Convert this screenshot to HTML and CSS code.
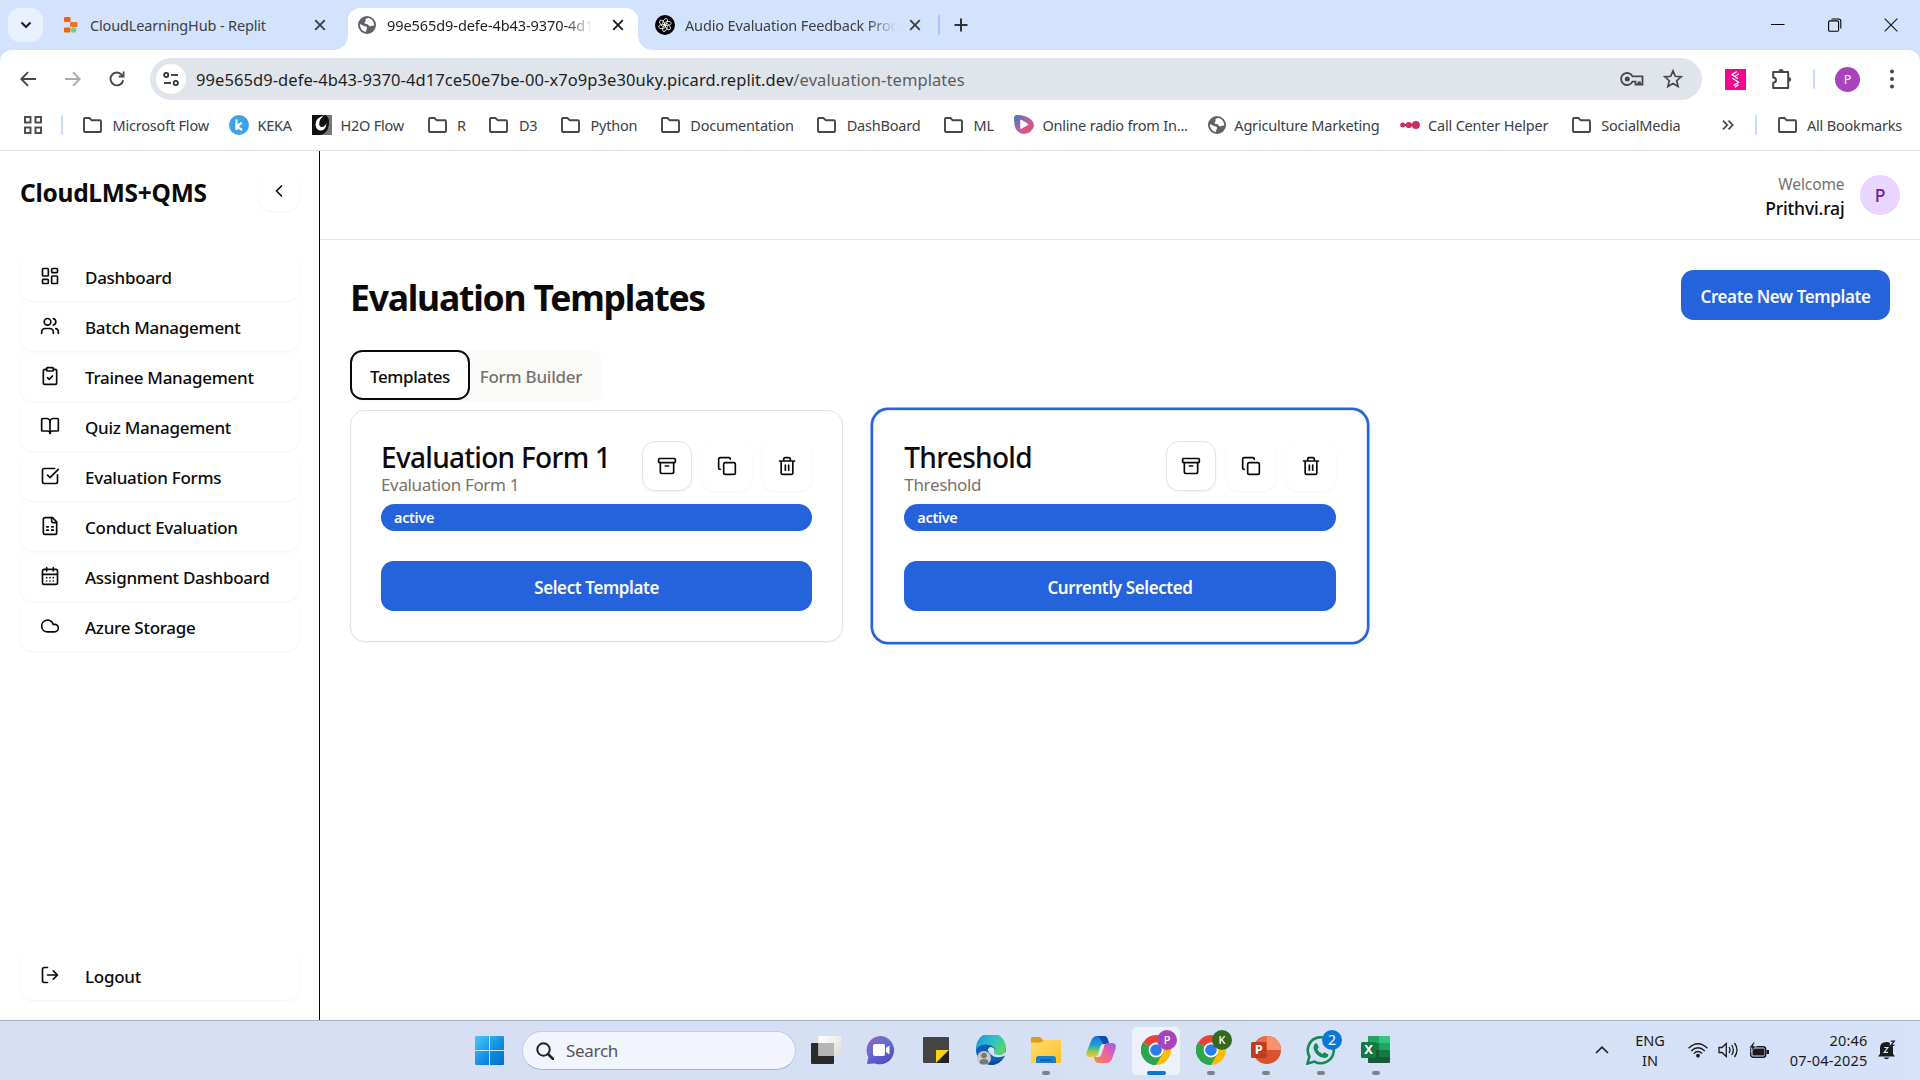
FILE: index.html
```html
<!DOCTYPE html>
<html lang="en">
<head>
<meta charset="utf-8">
<title>Evaluation Templates</title>
<link rel="stylesheet" href="styles.css">
</head>
<body>
<svg class="defs" width="0" height="0">
  <symbol id="folder" viewBox="0 0 21 18"><path d="M2 15V3Q2 2 3 2H7.5L9.7 4.3H18Q19 4.3 19 5.3V15Q19 16 18 16H3Q2 16 2 15Z" fill="none" stroke="#474747" stroke-width="1.9"/></symbol>
  <symbol id="globe" viewBox="0 0 18 18"><circle cx="9" cy="9" r="9" fill="#5f6368"/><path d="M10.500 2C8 2.200 6.800 3.500 7.500 4.600 8.200 5.600 6.300 6 6.600 7.200 7 8.300 9.600 7.600 10.200 8.800 10.700 10 12 10.800 13.200 10 14.300 9.400 15.500 9.800 16.200 9.200 16 5.500 13.800 2.700 10.500 2ZM1.900 8.300C1.700 12 4.500 15.300 7.600 15.900 8.600 15 7.800 14 8.700 13.200 9.700 12.200 8.800 10.300 7 10.300 5.200 10.300 4.300 8.500 1.900 8.300Z" fill="#fff"/></symbol>
  <symbol id="x" viewBox="0 0 12 12"><path d="M1.2 1.2 10.8 10.8M10.8 1.2 1.2 10.8" fill="none" stroke="currentColor" stroke-width="1.9"/></symbol>
  <symbol id="chrome" viewBox="0 0 30 30"><path d="M15 15 2.01 7.5A15 15 0 0 1 27.99 7.5Z" fill="#ea4335"/><path d="M15 15 27.99 7.5A15 15 0 0 1 15 30Z" fill="#fbbc04"/><path d="M15 15 15 30A15 15 0 0 1 2.01 7.5Z" fill="#2da44e"/><path d="M15 7.5H28L21.5 18.7 15 30 17 20Z" fill="#fbbc04"/><path d="M2 7.5 8.6 18.8 15 22.5 21.4 18.8 15 30A15 15 0 0 1 2 7.5Z" fill="#2da44e"/><circle cx="15" cy="15" r="7.4" fill="#fff"/><circle cx="15" cy="15" r="5.8" fill="#2b7de9"/></symbol>
  <symbol id="archive" viewBox="0 0 24 24"><rect x="2" y="3" width="20" height="5" rx="1"/><path d="M4 8v11a2 2 0 0 0 2 2h12a2 2 0 0 0 2-2V8M10 12h4"/></symbol>
  <symbol id="copy" viewBox="0 0 24 24"><rect x="8" y="8" width="14" height="14" rx="2"/><path d="M4 16c-1.1 0-2-.9-2-2V4c0-1.100.9-2 2-2h10c1.100 0 2 .9 2 2"/></symbol>
  <symbol id="trash" viewBox="0 0 24 24"><path d="M3 6h18M19 6v14c0 1-1 2-2 2H7c-1 0-2-1-2-2V6M8 6V4c0-1 1-2 2-2h4c1 0 2 1 2 2v2M10 11v6M14 11v6"/></symbol>
</svg>

<header class="browser">
  <div class="tabstrip">
    <button class="tab-search"><svg width="12" height="8" viewBox="0 0 12 8"><path d="M1.500 1.500 6 6 10.500 1.500" fill="none" stroke="#1f1f1f" stroke-width="2.200"/></svg></button>
    <div class="tab tab-replit">
      <svg width="14" height="16" viewBox="0 0 14 16"><rect width="6.500" height="5" rx="1" fill="#f26207"/><rect x="6" y="5" width="7.500" height="5" rx="1" fill="#f2702a"/><rect y="10.500" width="6.500" height="5" rx="1" fill="#f26207"/><circle cx="9.700" cy="13" r="2.700" fill="#5fd68b"/></svg>
      <span class="tab-title">CloudLearningHub - Replit</span>
      <svg class="close" width="12" height="12"><use href="#x"/></svg>
    </div>
    <div class="tab tab-active">
      <svg width="18" height="18"><use href="#globe"/></svg>
      <span class="tab-title faded">99e565d9-defe-4b43-9370-4d1</span>
      <svg class="close" width="12" height="12"><use href="#x"/></svg>
    </div>
    <div class="tab tab-audio">
      <svg width="20" height="20" viewBox="0 0 20 20"><circle cx="10" cy="10" r="10" fill="#000"/><g fill="none" stroke="#fff" stroke-width=".8"><ellipse cx="8.700" cy="7" rx="2" ry="3.500" transform="rotate(25 10 10)"/><ellipse cx="8.700" cy="7" rx="2" ry="3.500" transform="rotate(85 10 10)"/><ellipse cx="8.700" cy="7" rx="2" ry="3.500" transform="rotate(145 10 10)"/><ellipse cx="8.700" cy="7" rx="2" ry="3.500" transform="rotate(205 10 10)"/><ellipse cx="8.700" cy="7" rx="2" ry="3.500" transform="rotate(265 10 10)"/><ellipse cx="8.700" cy="7" rx="2" ry="3.500" transform="rotate(325 10 10)"/></g></svg>
      <span class="tab-title faded">Audio Evaluation Feedback Proc</span>
      <svg class="close" width="12" height="12"><use href="#x"/></svg>
    </div>
    <i class="tab-divider"></i>
    <svg class="new-tab" width="14" height="14" viewBox="0 0 14 14"><path d="M7 .5V13.500M.5 7H13.500" stroke="#333" stroke-width="2"/></svg>
    <div class="window-controls">
      <svg width="14" height="14" viewBox="0 0 14 14"><path d="M0 6.500H13.500" stroke="#000"/></svg>
      <svg width="14" height="14" viewBox="0 0 14 14"><path d="M3.500 1H10.500Q12.800 1 12.800 3.300V10.500" fill="none" stroke="#000" stroke-width="1.100"/><rect x=".6" y="2.900" width="10" height="10.300" rx="1.200" fill="none" stroke="#000" stroke-width="1.100"/></svg>
      <svg width="14" height="14" viewBox="0 0 14 14"><path d="M.7.7 13.300 13.300M13.300.7.7 13.300" stroke="#111" stroke-width="1.100"/></svg>
    </div>
  </div>

  <div class="toolbar">
    <svg width="16" height="16" viewBox="0 0 16 16"><path d="M16 8H1.700M8 1.200 1.300 8 8 14.800" fill="none" stroke="#474747" stroke-width="1.900"/></svg>
    <svg width="16" height="16" viewBox="0 0 16 16"><path d="M0 8H14.300M8 1.200 14.700 8 8 14.800" fill="none" stroke="#a8abad" stroke-width="1.900"/></svg>
    <svg width="16" height="16" viewBox="0 0 16 16"><path d="M14.200 9.200A6.400 6.400 0 1 1 12.800 3.800L14.500 5.600" fill="none" stroke="#474747" stroke-width="1.900"/><path d="M15.500.6V6.400H9.700V4.600H13.700V.6Z" fill="#474747"/></svg>
    <div class="omnibox">
      <span class="site-info"><svg width="16" height="14" viewBox="0 0 16 14"><g fill="none" stroke="#333" stroke-width="1.800"><circle cx="3.200" cy="3" r="2.100"/><path d="M8 3H15"/><circle cx="12.800" cy="11" r="2.100"/><path d="M1 11H8"/></g></svg></span>
      <span class="url">99e565d9-defe-4b43-9370-4d17ce50e7be-00-x7o9p3e30uky.picard.replit.dev<span class="path">/evaluation-templates</span></span>
      <svg class="key" width="24" height="16" viewBox="0 0 24 16"><g fill="none" stroke="#474747" stroke-width="1.800"><path d="M12.500 5.400A6 6 0 1 0 12.500 10.600H15.500V13.500H18.500V11.300H20V13.500H22.500V5.400Z"/></g><circle cx="7.300" cy="8" r="2.500" fill="#474747"/></svg>
      <svg width="20" height="20" viewBox="0 0 20 20"><path d="M10 1.800 12.300 7.300 18.200 7.800 13.700 11.700 15.100 17.500 10 14.400 4.900 17.500 6.300 11.700 1.800 7.800 7.700 7.300Z" fill="none" stroke="#474747" stroke-width="1.700"/></svg>
    </div>
    <svg class="ext-pink" width="21" height="21" viewBox="0 0 21 21"><rect width="21" height="21" fill="#f5058f"/><path d="M11.800 2.500 7 5.600 13 9.800M13.800 4.800 10.200 7.200M7.200 9 13.500 13.300 8.600 16.600M13.500 15.600 9.800 18.300" fill="none" stroke="#fff" stroke-width="1.300"/></svg>
    <svg class="ext-puzzle" width="22" height="22" viewBox="0 0 22 22"><path d="M2.200 4H17.200V20H2.200V14.800Q5 14.600 5 12.100T2.200 9.400Z" fill="none" stroke="#474747" stroke-width="2" stroke-linejoin="round"/><path d="M7.500 3.500A2.500 2.500 0 0 1 12.500 3.500ZM17.700 9A2.500 2.500 0 0 1 17.700 14Z" fill="#474747"/></svg>
    <i class="sep"></i>
    <span class="profile">P</span>
    <svg class="menu-dots" width="4" height="20" viewBox="0 0 4 20"><g fill="#474747"><circle cx="2" cy="2.500" r="2"/><circle cx="2" cy="10" r="2"/><circle cx="2" cy="17.500" r="2"/></g></svg>
  </div>

  <nav class="bookmarks">
    <svg class="apps" width="18" height="18" viewBox="0 0 18 18"><g fill="none" stroke="#474747" stroke-width="1.900"><rect x="1" y="1" width="5.500" height="5.500"/><rect x="11.500" y="1" width="5.500" height="5.500"/><rect x="1" y="11.500" width="5.500" height="5.500"/><rect x="11.500" y="11.500" width="5.500" height="5.500"/></g></svg>
    <i class="sep"></i>
    <a class="first"><svg width="21" height="18"><use href="#folder"/></svg>Microsoft Flow</a>
    <a class="near"><svg width="20" height="20" viewBox="0 0 20 20"><circle cx="10" cy="10" r="10" fill="#3ba1ea"/><path d="M7.500 4.500V15M12.800 7.700 8 11.500 13 15" fill="none" stroke="#fff" stroke-width="2.300"/></svg>KEKA</a>
    <a class="near"><svg width="20" height="20" viewBox="0 0 20 20"><rect width="20" height="20" fill="#111"/><path d="M14 0H20V20H9Q18 17 17 5Q16 2 14 0" fill="#777"/><path d="M13 0Q3 3 3.500 9.500T9.500 15.500Q14 15 14.500 8 12.500 12.500 9.500 12T7.500 6.500Q8.500 2.500 13 0Z" fill="#fff"/></svg>H2O Flow</a>
    <a><svg width="21" height="18"><use href="#folder"/></svg>R</a>
    <a><svg width="21" height="18"><use href="#folder"/></svg>D3</a>
    <a><svg width="21" height="18"><use href="#folder"/></svg>Python</a>
    <a><svg width="21" height="18"><use href="#folder"/></svg>Documentation</a>
    <a><svg width="21" height="18"><use href="#folder"/></svg>DashBoard</a>
    <a><svg width="21" height="18"><use href="#folder"/></svg>ML</a>
    <a class="near"><svg width="20" height="19" viewBox="0 0 20 19"><defs><linearGradient id="rg" x1="0" y1="0" x2="1" y2="1"><stop offset="0" stop-color="#3d79c8"/><stop offset=".6" stop-color="#c95c95"/><stop offset="1" stop-color="#f04a69"/></linearGradient></defs><path d="M0 3Q0 0 3 0 12 0 17 4.500 20 7 20 11 18 18 10 19 2 18 .5 10Z" fill="url(#rg)"/><path d="M7 5.500 13.500 9.300 7 13.200Z" fill="#fff" stroke="#fff" stroke-width="1.500" stroke-linejoin="round"/></svg>Online radio from In...</a>
    <a class="near"><svg width="18" height="18"><use href="#globe"/></svg>Agriculture Marketing</a>
    <a class="near"><svg width="20" height="8" viewBox="0 0 20 8"><g fill="#c92e61"><circle cx="2.700" cy="4" r="2.500"/><circle cx="8.800" cy="4" r="3.100"/><circle cx="15.900" cy="4" r="4"/><path d="M2 3H14V5H2Z"/></g></svg>Call Center Helper</a>
    <a><svg width="21" height="18"><use href="#folder"/></svg>SocialMedia</a>
    <svg class="more" width="12" height="10" viewBox="0 0 12 10"><path d="M1 .7 5.200 5 1 9.300M6.500.7 10.700 5 6.500 9.300" fill="none" stroke="#474747" stroke-width="1.700"/></svg>
    <i class="sep"></i>
    <a class="all"><svg width="21" height="18"><use href="#folder"/></svg>All Bookmarks</a>
  </nav>
</header>

<div class="app">
  <aside class="sidebar">
    <div class="brand"><h2>CloudLMS+QMS</h2><button class="icon-btn collapse"><svg class="ico" viewBox="0 0 24 24"><path d="m15 18-6-6 6-6"/></svg></button></div>
    <nav class="menu">
      <a><svg class="ico" viewBox="0 0 24 24"><rect x="3" y="3" width="7" height="9" rx="1"/><rect x="14" y="3" width="7" height="5" rx="1"/><rect x="14" y="12" width="7" height="9" rx="1"/><rect x="3" y="16" width="7" height="5" rx="1"/></svg><span>Dashboard</span></a>
      <a><svg class="ico" viewBox="0 0 24 24"><path d="M16 21v-2a4 4 0 0 0-4-4H6a4 4 0 0 0-4 4v2"/><circle cx="9" cy="7" r="4"/><path d="M22 21v-2a4 4 0 0 0-3-3.870M16 3.130a4 4 0 0 1 0 7.750"/></svg><span>Batch Management</span></a>
      <a><svg class="ico" viewBox="0 0 24 24"><rect x="8" y="2" width="8" height="4" rx="1"/><path d="M16 4h2a2 2 0 0 1 2 2v14a2 2 0 0 1-2 2H6a2 2 0 0 1-2-2V6a2 2 0 0 1 2-2h2"/><path d="m9 14 2 2 4-4"/></svg><span>Trainee Management</span></a>
      <a><svg class="ico" viewBox="0 0 24 24"><path d="M12 7v14"/><path d="M3 18a1 1 0 0 1-1-1V4a1 1 0 0 1 1-1h5a4 4 0 0 1 4 4 4 4 0 0 1 4-4h5a1 1 0 0 1 1 1v13a1 1 0 0 1-1 1h-6a3 3 0 0 0-3 3 3 3 0 0 0-3-3z"/></svg><span>Quiz Management</span></a>
      <a><svg class="ico" viewBox="0 0 24 24"><path d="M21 10.500V19a2 2 0 0 1-2 2H5a2 2 0 0 1-2-2V5a2 2 0 0 1 2-2h12.500"/><path d="m9 11 3 3L22 4"/></svg><span>Evaluation Forms</span></a>
      <a><svg class="ico" viewBox="0 0 24 24"><path d="M15 2H6a2 2 0 0 0-2 2v16a2 2 0 0 0 2 2h12a2 2 0 0 0 2-2V7Z"/><path d="M14 2v4a2 2 0 0 0 2 2h4M8 13h2M14 13h2M8 17h2M14 17h2"/></svg><span>Conduct Evaluation</span></a>
      <a><svg class="ico" viewBox="0 0 24 24"><path d="M8 2v4M16 2v4"/><rect x="3" y="4" width="18" height="18" rx="2"/><path d="M3 10h18M8 14h.01M12 14h.01M16 14h.01M8 18h.01M12 18h.01M16 18h.01"/></svg><span>Assignment Dashboard</span></a>
      <a><svg class="ico" viewBox="0 0 24 24"><path d="M17.500 19H9a7 7 0 1 1 6.710-9h1.790a4.500 4.500 0 1 1 0 9Z"/></svg><span>Azure Storage</span></a>
    </nav>
    <nav class="menu bottom">
      <a><svg class="ico" viewBox="0 0 24 24"><path d="M9 21H5a2 2 0 0 1-2-2V5a2 2 0 0 1 2-2h4M16 17l5-5-5-5M21 12H9"/></svg><span>Logout</span></a>
    </nav>
  </aside>

  <main class="main">
    <div class="topbar">
      <div class="user"><span class="welcome">Welcome</span><span class="name">Prithvi.raj</span></div>
      <span class="avatar">P</span>
    </div>
    <div class="content">
      <div class="heading"><h1>Evaluation Templates</h1><button class="btn create">Create New Template</button></div>
      <div class="tabs"><button class="on">Templates</button><button>Form Builder</button></div>
      <div class="cards">
        <section class="card">
          <div class="card-head">
            <div><h3>Evaluation Form 1</h3><p>Evaluation Form 1</p></div>
            <div class="actions"><button class="icon-btn outline"><svg class="ico"><use href="#archive"/></svg></button><button class="icon-btn"><svg class="ico"><use href="#copy"/></svg></button><button class="icon-btn"><svg class="ico"><use href="#trash"/></svg></button></div>
          </div>
          <div class="badge">active</div>
          <button class="btn">Select Template</button>
        </section>
        <section class="card selected">
          <div class="card-head">
            <div><h3>Threshold</h3><p>Threshold</p></div>
            <div class="actions"><button class="icon-btn outline"><svg class="ico"><use href="#archive"/></svg></button><button class="icon-btn"><svg class="ico"><use href="#copy"/></svg></button><button class="icon-btn"><svg class="ico"><use href="#trash"/></svg></button></div>
          </div>
          <div class="badge">active</div>
          <button class="btn">Currently Selected</button>
        </section>
      </div>
    </div>
  </main>
</div>

<footer class="taskbar">
  <div class="start">
    <svg width="29" height="29" viewBox="0 0 29 29"><defs><linearGradient id="wg" x1="0" y1="0" x2="1" y2="1"><stop offset="0" stop-color="#4bc8fb"/><stop offset=".6" stop-color="#0c8ae0"/><stop offset="1" stop-color="#0270cf"/></linearGradient></defs><path d="M1 0H14V14H0V1Q0 0 1 0ZM15 0H28Q29 0 29 1V14H15ZM0 15H14V29H1Q0 29 0 28ZM15 15H29V28Q29 29 28 29H15Z" fill="url(#wg)"/></svg>
    <div class="search"><svg width="18" height="18" viewBox="0 0 18 18"><circle cx="7.500" cy="7.500" r="6.200" fill="none" stroke="#222" stroke-width="2"/><path d="M12 12 17 17" stroke="#222" stroke-width="2.500" stroke-linecap="round"/></svg>Search</div>
  </div>
  <div class="pinned">
    <span class="task"><svg width="30" height="30" viewBox="0 0 30 30"><defs><linearGradient id="tv" x1="0" y1="0" x2="1" y2="1"><stop offset="0" stop-color="#fff"/><stop offset="1" stop-color="#dcdcdc"/></linearGradient></defs><rect y="8" width="23" height="21" rx="1" fill="#2a2a2a"/><rect x="7.500" y="1" width="22.500" height="20" rx="1" fill="url(#tv)"/><path d="M7.500 8H23V21H7.500Z" fill="#b5b5b5"/></svg></span>
    <span class="task"><svg width="30" height="30" viewBox="0 0 30 30"><defs><linearGradient id="tm" x1="0" y1="0" x2=".7" y2="1"><stop offset="0" stop-color="#9463ad"/><stop offset=".45" stop-color="#6a6bd0"/><stop offset="1" stop-color="#4e4fc0"/></linearGradient></defs><path d="M15 1A14.200 14.200 0 1 1 9 28.500L1 29 2.300 22A14.200 14.200 0 0 1 15 1Z" fill="url(#tm)"/><rect x="7" y="9" width="12" height="12" rx="2" fill="#fff"/><path d="M20 13 23.500 10.500V19.500L20 17Z" fill="#fff"/></svg></span>
    <span class="task"><svg width="30" height="30" viewBox="0 0 30 30"><path d="M2 3Q2 2 3 2H27Q28 2 28 3V15L15 28H3Q2 28 2 27Z" fill="#444"/><path d="M15 15H28L15 28Z" fill="#fed10a"/><path d="M28 15V28H15Z" fill="#222"/></svg></span>
    <span class="task"><svg width="30" height="30" viewBox="0 0 30 30"><defs><linearGradient id="eg" x1="0" y1="0" x2="1" y2=".5"><stop offset="0" stop-color="#1c8fd9"/><stop offset=".55" stop-color="#28bfd0"/><stop offset="1" stop-color="#55d66b"/></linearGradient></defs><circle cx="15" cy="15" r="15" fill="#0c61b5"/><path d="M0 14A15 15 0 0 1 30 12Q30 20 23 20 17 20 18.500 16T14 10Q5 8 0 14Z" fill="url(#eg)"/><path d="M14 12Q18.500 12 18.500 15.500 17 20 23 20 27.500 20 29.500 16L30 20 28 21Q20 24 15.500 20T12 14Z" fill="#d6e0f4"/><path d="M10 22Q16 31 27 23 22 31 13 30Z" fill="#0d4a94"/><circle cx="8" cy="23" r="7" fill="#c9c7c5"/><circle cx="8" cy="20.500" r="2.800" fill="#777"/><path d="M3.500 28Q3.500 24 8 24T12.500 28Q8 31 3.500 28Z" fill="#777"/></svg></span>
    <span class="task open"><svg width="30" height="30" viewBox="0 0 30 30"><defs><linearGradient id="fg" x1="0" y1="0" x2="1" y2="1"><stop offset="0" stop-color="#ffdd6e"/><stop offset="1" stop-color="#fbbf2b"/></linearGradient></defs><path d="M0 3.500Q0 2 1.500 2H9L12 5H16V12H0Z" fill="#dd9c12"/><path d="M0 8.500Q0 7.500 1 7.500H10L13 5H29Q30 5 30 6V27Q30 28 29 28H1Q0 28 0 27Z" fill="url(#fg)"/><path d="M5 24Q5 21 8 21H22Q25 21 25 24V28H5Z" fill="#157fd2"/><path d="M9 25H21" stroke="#084d8c" stroke-width="1.200"/></svg></span>
    <span class="task"><svg width="30" height="30" viewBox="0 0 30 30"><defs><linearGradient id="c1" x1="0" y1="0" x2="0" y2="1"><stop offset="0" stop-color="#1c6fe0"/><stop offset=".45" stop-color="#18a5cf"/><stop offset=".7" stop-color="#82c956"/><stop offset="1" stop-color="#f5c72a"/></linearGradient><linearGradient id="c2" x1="1" y1="0" x2="0" y2="1"><stop offset="0" stop-color="#9a5cf2"/><stop offset=".5" stop-color="#f0629b"/><stop offset="1" stop-color="#fb8c3c"/></linearGradient></defs><path d="M11 1H18Q21 1 22 5L23 9H17Q15 9 14 12L12 19Q11 22 8 22H4Q-1 22 1 16L5 6Q7 1 11 1Z" fill="url(#c1)"/><path d="M11 1H18Q21 1 22 5L23 9H17L15 5Q14 2 11 1Z" fill="#1346b8"/><path d="M22 8H26Q31 8 29.500 14L26 24Q24 28 20 28H12Q9 28 8 22H12Q14 22 15 20L18 11Q19 8 22 8Z" fill="url(#c2)"/><path d="M18 12 15 20Q14 22 12 22L14 14Q15 10 18 9Z" fill="#dbe4f5"/></svg></span>
    <span class="task open current"><svg width="30" height="30"><use href="#chrome"/></svg><b class="dot purple">P</b></span>
    <span class="task open"><svg width="30" height="30"><use href="#chrome"/></svg><b class="dot green">K</b></span>
    <span class="task open"><svg width="30" height="30" viewBox="0 0 30 30"><circle cx="16" cy="15" r="14" fill="#d9532f"/><path d="M16 1A14 14 0 0 1 30 15H16Z" fill="#fc8f6c"/><path d="M16 1A14 14 0 0 0 2.500 12L16 15Z" fill="#ec6b48"/><rect y="7" width="15.500" height="16" rx="1.500" fill="#c03a1b"/><text x="7.700" y="19.200" class="glyph">P</text></svg></span>
    <span class="task open"><svg width="30" height="30" viewBox="0 0 30 30"><path d="M1.500 28.500 3.400 21.500A13 13 0 1 1 8.500 26.600Z" fill="none" stroke="#138a53" stroke-width="2.600"/><path d="M10.500 8 12.800 12.300 11.300 14.200Q13 17.500 16.500 19L18.300 17.300 22.500 19.500Q22 23 18.500 23 13.500 22.500 10 18.500 7 14.500 7.800 11 8.500 8 10.500 8Z" fill="#138a53"/></svg><b class="dot count">2</b></span>
    <span class="task open"><svg width="30" height="30" viewBox="0 0 30 30"><path d="M7 1H18V8H7Z" fill="#22a366"/><path d="M18 1H28Q29 1 29 2V8H18Z" fill="#33c481"/><path d="M7 8H18V15H7Z" fill="#107c41"/><path d="M18 8H29V15H18Z" fill="#21a366"/><path d="M7 15H18V22H7Z" fill="#185c37"/><path d="M18 15H29V22H18Z" fill="#107c41"/><path d="M7 22H29V27Q29 28 28 28H8Q7 28 7 27Z" fill="#185c37"/><rect y="7" width="15" height="16" rx="1.500" fill="#107c41"/><text x="7.500" y="19.200" class="glyph">X</text></svg></span>
  </div>
  <div class="tray">
    <svg class="caret" width="14" height="8" viewBox="0 0 14 8"><path d="M1 7 7 1.200 13 7" fill="none" stroke="#1b1b1b" stroke-width="1.600"/></svg>
    <span class="lang">ENG<br>IN</span>
    <svg width="20" height="15" viewBox="0 0 20 15"><g fill="none" stroke="#1b1b1b" stroke-width="1.300"><path d="M.5 5.300Q10-3.700 19.500 5.300M3.200 8Q10 1.500 16.800 8M5.700 10.600Q10 6.500 14.300 10.600"/></g><circle cx="10" cy="12.700" r="1.900" fill="#1b1b1b"/></svg>
    <svg width="21" height="16" viewBox="0 0 21 16"><g fill="none" stroke="#1b1b1b" stroke-width="1.300"><path d="M1 5.500H4L8.300 1.500V14.500L4 10.500H1ZM11 5Q13 8 11 11M13.700 3Q17 8 13.700 13M16.500 1Q21.500 8 16.500 15"/></g></svg>
    <svg width="20" height="17" viewBox="0 0 20 17"><rect x="1.700" y="4.700" width="15" height="10.600" rx="2.500" fill="none" stroke="#1b1b1b" stroke-width="1.400"/><path d="M3.500 6.500H15.500V13.500H3.500Z" fill="#1b1b1b"/><path d="M17.500 8H20V12H17.500Z" fill="#1b1b1b"/><path d="M4.500 0 0 6H3L1.800 10 7.500 4H4.300L6 0Z" fill="#1b1b1b" stroke="#d5e1f7" stroke-width=".7"/></svg>
    <span class="clock">20:46<br>07-04-2025</span>
    <svg class="bell" width="18" height="20" viewBox="0 0 18 20"><path d="M2 14V8Q2 2 8.500 2T15 8V14L17 16.500H0ZM5.500 17.500H11.500Q8.500 21 5.500 17.500Z" fill="#1b1b1b"/><path d="M6.200 7.500H9.800L6.200 12.300H10" fill="none" stroke="#d5e1f7" stroke-width="1.200"/><path d="M11.800 0H18V6H11.800Z" fill="#d5e1f7"/><path d="M12.700 1.200H16.200L12.900 5.300H16.500" fill="none" stroke="#1b1b1b" stroke-width="1.300"/></svg>
  </div>
</footer>
</body>
</html>
```
FILE: styles.css
```css
* { box-sizing: border-box; }
body {
  margin: 0;
  width: 1920px;
  height: 1080px;
  overflow: hidden;
  display: flex;
  flex-direction: column;
  background: #fff;
  color: #0c0a09;
  font-family: "Noto Sans", "Open Sans", sans-serif;
}
button { font-family: inherit; border: 0; padding: 0; background: none; color: inherit; }
h1, h2, h3, p { margin: 0; }
svg { flex: none; display: block; }
.defs { position: absolute; }

/* Browser chrome */
.browser { height: 151px; background: #d3e3fd; border-bottom: 1px solid #dedede; display: flex; flex-direction: column; }
.tabstrip { height: 50px; display: flex; align-items: center; color: #3c4043; font-size: 14.5px; }
.tab-search { width: 35px; height: 34px; margin-left: 8px; border-radius: 12px; background: #e9f0fe; display: flex; align-items: center; justify-content: center; }
.tab { display: flex; align-items: center; white-space: nowrap; }
.tab-title { letter-spacing: -0.15px; }
.tab .close { margin-left: auto; }
.faded { -webkit-mask-image: linear-gradient(90deg, #000 86%, transparent); mask-image: linear-gradient(90deg, #000 86%, transparent); }
.tab-replit { width: 262px; margin-left: 21px; }
.tab-replit .tab-title { margin-left: 12px; }
.tab-active {
  position: relative;
  align-self: flex-end;
  width: 290px;
  height: 42px;
  margin-left: 22px;
  padding: 0 14px 8px 10px;
  border-radius: 12px 12px 0 0;
  background: #fff;
  color: #1f1f1f;
}
.tab-active::before, .tab-active::after { content: ""; position: absolute; bottom: 0; width: 14px; height: 14px; }
.tab-active::before { left: -14px; background: radial-gradient(circle at 0 0, transparent 13.5px, #fff 14px); }
.tab-active::after { right: -14px; background: radial-gradient(circle at 100% 0, transparent 13.5px, #fff 14px); }
.tab-active .tab-title { margin-left: 11px; letter-spacing: -0.07px; }
.tab-audio { width: 266px; margin-left: 17px; }
.tab-audio .tab-title { margin-left: 10px; }
.tab-divider { width: 2px; height: 20px; margin-left: 17px; background: #a8c7fa; }
.new-tab { margin-left: 14px; }
.window-controls { display: flex; gap: 42.5px; margin-left: auto; margin-right: 22px; }

.toolbar { height: 64px; padding: 0 26px 6px 20px; display: flex; align-items: center; background: #fff; border-radius: 12px 12px 0 0; }
.toolbar > svg + svg { margin-left: 28.500px; }
.omnibox { width: 1552px; height: 42px; margin-left: 25px; border-radius: 21px; background: #e0e5ec; display: flex; align-items: center; padding: 0 19px 0 6px; }
.site-info { width: 30px; height: 30px; border-radius: 50%; background: #fff; display: flex; align-items: center; justify-content: center; }
.url { margin-left: 10px; font-size: 16.5px; letter-spacing: 0.08px; color: #1f1f1f; }
.url .path { color: #5b5e61; }
.key { margin-left: auto; margin-right: 19px; }
.ext-pink { margin-left: 23px; }
.toolbar > .ext-pink + .ext-puzzle { margin-left: 25px; }
.sep { width: 2px; height: 20px; background: #c9dcfc; border-radius: 1px; }
.toolbar .sep { margin-left: 20px; }
.profile { width: 25px; height: 25px; margin-left: 20px; border-radius: 50%; background: #a843bb; color: #fff; font-size: 12.5px; display: flex; align-items: center; justify-content: center; }
.menu-dots { margin-left: auto; }

.bookmarks { height: 36px; padding: 0 18px 15px 23.500px; display: flex; align-items: center; background: #fff; color: #3c4043; font-size: 14.5px; letter-spacing: -0.2px; flex: 1; }
.bookmarks a { display: flex; align-items: center; gap: 9.5px; white-space: nowrap; margin-left: 22.500px; }
.bookmarks a.first { margin-left: 19.500px; }
.bookmarks a.near { gap: 8px; margin-left: 20.500px; }
.bookmarks .apps { margin-right: 19px; }
.bookmarks .more { margin-left: auto; margin-right: 21px; }
.bookmarks a.all { margin-left: 20px; }

/* Application */
.app { flex: 1; display: flex; min-height: 0; }
.ico { width: 20px; height: 20px; fill: none; stroke: currentColor; stroke-width: 2; stroke-linecap: round; stroke-linejoin: round; }
.icon-btn { width: 50px; height: 50px; border-radius: 13px; background: #fff; display: flex; align-items: center; justify-content: center; box-shadow: 0 1px 3px rgba(0, 0, 0, .05); }
.icon-btn.outline { border: 1px solid #e5e5e5; }

.sidebar { width: 320px; border-right: 1px solid #0c0a09; display: flex; flex-direction: column; padding: 20px; }
.brand { display: flex; justify-content: space-between; margin-bottom: 36px; }
.brand h2 { font-size: 24.5px; line-height: 44px; letter-spacing: -0.28px; }
.icon-btn.collapse { width: 40px; height: 40px; }
.menu { display: flex; flex-direction: column; }
.menu a { height: 50px; padding: 0 20px; display: flex; align-items: center; border-radius: 13px; box-shadow: 0 1px 3px rgba(0, 0, 0, .05); font-size: 17px; font-weight: 500; letter-spacing: -0.27px; }
.menu span { margin-left: 25px; padding-top: 3px; }
.menu.bottom { margin-top: auto; }

.main { flex: 1; }
.topbar { height: 89px; border-bottom: 1px solid #e5e5e5; padding: 0 20px; display: flex; align-items: center; justify-content: flex-end; gap: 15.500px; }
.user { display: flex; flex-direction: column; text-align: right; line-height: 24px; padding-top: 1px; }
.welcome { font-size: 15.5px; letter-spacing: -0.1px; color: #78716c; }
.name { font-size: 17.5px; font-weight: 500; letter-spacing: -0.15px; }
.avatar { width: 40px; height: 40px; border-radius: 50%; background: #e9d5ff; color: #6b21a8; font-size: 17.5px; font-weight: 500; display: flex; align-items: center; justify-content: center; }

.content { padding: 30px; }
.heading { display: flex; justify-content: space-between; height: 80px; }
h1 { font-size: 35.5px; line-height: 54px; letter-spacing: -1.22px; }
.btn { height: 50px; border-radius: 12.5px; background: #2563dc; color: #f8fafc; font-size: 17px; font-weight: 600; letter-spacing: -0.4px; padding-top: 2px; }
.create { width: 209px; }
.tabs { width: 252px; height: 51px; border-radius: 12.5px; background: #fafaf9; display: flex; font-size: 17px; font-weight: 500; letter-spacing: -0.25px; color: #78716c; box-shadow: 0 1px 2px rgba(0, 0, 0, .03); }
.tabs button { flex: 1; height: 50px; padding-top: 3px; font-size: inherit; font-weight: inherit; letter-spacing: inherit; padding-right: 10px; }
.tabs .on { flex: none; width: 120px; padding-right: 0; border: 2.5px solid #0c0a09; border-radius: 12.5px; background: #fff; color: #0c0a09; letter-spacing: -0.42px; }
.cards { margin-top: 9px; display: grid; grid-template-columns: repeat(3, 1fr); gap: 30px; }
.card { height: 232px; padding: 30px; border: 1px solid #e3e3e3; border-radius: 15px; background: #fff; box-shadow: 0 1px 2px rgba(0, 0, 0, .05); display: flex; flex-direction: column; }
.card.selected { box-shadow: 0 0 0 2.500px #2563dc; }
.card-head { display: flex; justify-content: space-between; height: 63px; }
.card h3 { font-size: 28px; font-weight: 500; line-height: 32px; letter-spacing: -0.7px; white-space: nowrap; }
.card p { font-size: 17px; line-height: 24px; letter-spacing: -0.35px; color: #78716c; }
.actions { display: flex; gap: 10px; }
.badge { height: 27px; margin-bottom: 30px; padding-left: 13px; border-radius: 14px; background: #2563dc; color: #f8fafc; font-size: 14.5px; font-weight: 600; line-height: 26px; letter-spacing: -0.35px; }

/* Taskbar */
.taskbar { height: 60px; border-top: 1px solid #a9b2c1; background: linear-gradient(90deg, #d8def3, #d5e0f4 50%, #d5e2f9); display: flex; align-items: center; }
.start { display: flex; align-items: center; margin-left: 475px; }
.search { width: 274px; height: 39px; margin-left: 17.500px; padding-left: 13px; border-radius: 20px; border: 1px solid #c3cde3; border-bottom-color: #a9b3cb; background: #f2f5fd; display: flex; align-items: center; gap: 12.500px; font-size: 17px; letter-spacing: -0.3px; color: #555; }
.pinned { display: flex; gap: 7px; margin-left: 6.500px; }
.task { position: relative; width: 48px; height: 48px; padding-bottom: 1px; border-radius: 5px; display: flex; align-items: center; justify-content: center; }
.task.current { background: #edf1fb; }
.task.open::after { content: ""; position: absolute; bottom: 0; left: 20px; width: 8px; height: 4px; border-radius: 2px; background: #7c818c; }
.task.current::after { left: 14.500px; width: 19px; background: #0a76d3; }
.dot { position: absolute; left: 25px; top: 3px; width: 20px; height: 20px; border-radius: 50%; color: #fff; font-size: 11px; font-weight: 500; display: flex; align-items: center; justify-content: center; }
.purple { background: #a843bb; }
.green { background: #33691e; }
.count { background: #0a78d4; font-size: 14px; font-weight: 400; }
.glyph { font: 700 13px "Noto Sans", sans-serif; fill: #fff; text-anchor: middle; }
.tray { display: flex; align-items: center; margin-left: auto; margin-right: 24.500px; padding-bottom: 1px; font-size: 14.5px; line-height: 20px; color: #1b1b1b; gap: 10px; }
.lang { text-align: center; margin: 0 13px 0 16px; }
.clock { text-align: right; margin-left: 11px; letter-spacing: 0.2px; }
```
